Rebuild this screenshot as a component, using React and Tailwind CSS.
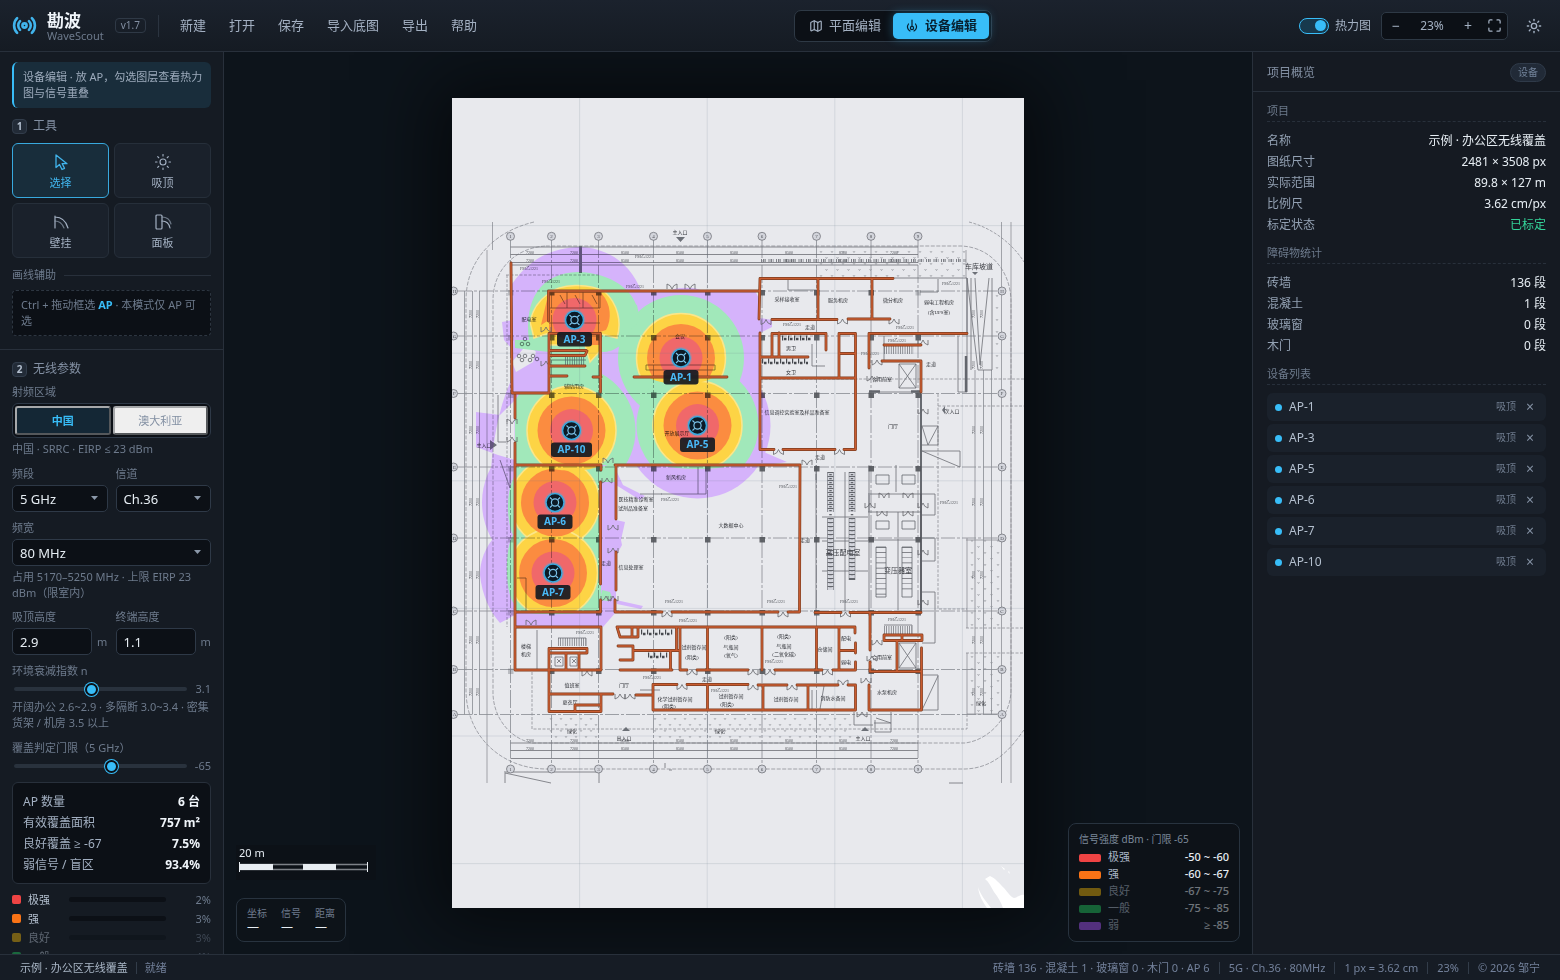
import { useState } from 'react';
import { Radio, Sun, Map as MapIcon, Maximize } from 'lucide-react';

const menus = ['新建', '打开', '保存', '导入底图', '导出', '帮助']

const levels = [
  { name: '极强', range: '-50 ~ -60', pct: '2%', color: 'bg-[#ef4444]', on: true },
  { name: '强', range: '-60 ~ -67', pct: '3%', color: 'bg-[#f97316]', on: true },
  { name: '良好', range: '-67 ~ -75', pct: '3%', color: 'bg-[#eab308]', on: false },
  { name: '一般', range: '-75 ~ -85', pct: '4%', color: 'bg-[#22c55e]', on: false },
  { name: '弱', range: '≥ -85', color: 'bg-[#a855f7]', on: false },
]

const aps = [
  { name: 'AP-1', x: 681, y: 358 },
  { name: 'AP-3', x: 574.5, y: 320 },
  { name: 'AP-5', x: 697.5, y: 425.5 },
  { name: 'AP-6', x: 555, y: 502.5 },
  { name: 'AP-7', x: 553, y: 573 },
  { name: 'AP-10', x: 571.5, y: 430.5 },
]

// axis grid of the building
const cols = [510.5, 551.5, 598.5, 653.5, 707.5, 762, 816.5, 871, 918]
const rows = [291, 336, 393.5, 467, 538, 611, 669.5, 714.5]
const rowNames = ['H', 'G', 'F', 'E', 'D', 'C', 'B', 'A']

// brick walls
const walls = `
M511 263L512 393H549V333.5H600.5V392 M548.5 321V291H759 M549 350.5H586 M549 355.5H585L587 351 M549 366H585 M549 376H567 M593 377H601
M634 377H727 M515 395V418 M515 443V670H601V627H515 M515 465H601V470 M615 465H800L799.5 612H788 M778 612H672 M662 612H615V600 M616 590V552 M616 519V465
M515 612H600.5V600 M600.5 584V482
M549 711.5V648.5H587V653H549 M566 653V670 M579 653V670 M549 694H613 M601 694V711.5H549 M601 705H575V711
M636 695H653V684.5H677 M687 684.5H748 M758 685H787 M797 685H838 M848 685H855.5V710H653V695 M707.5 685V710 M763 685V710 M808 685V710
M617 627H855V633 M617 627L620 637H638V627 M632 627V637 M618 646H633V660H620 M633 650.5H680 M670.5 651V670 M620 670H672 M680 627V670H687 M676.5 627V650
M697 670H748 M775 670H822 M833 670H855.5V662 M855.5 653V643 M707.5 627V670 M762 627V670 M816.5 627V670 M839 627V670 M839 650.5H855
M815 612.5H841 M850 612.5H921 M870 612.5V650 M870 662V671.5H921.5 M869 685V710H921.5V648 M884 635H922V640.5H884Z M902 635V640 M897 641V671
M759 319L760 278.5H893 M818 279V318 M872 279V318 M772 319.5H837 M848 319H890 M760 333V449.5H774 M783 449.5H835 M844 449.5H855.5V333.5H839V378 M760 378H855
M826 350V333.5H772V357 M779 333V357 M760 357H808 M839 353.5H855 M869 368V333.5H967 M884 345H921 M882 361H921V392`

// double doors: x, y, direction
const doors = [
  [766, 319.5, 1], [842.5, 319, 1], [894, 319, 1], [778.5, 449.5, 1], [839.5, 449.5, 1], [608, 463, -1], [667, 612, 1], [783, 612, 1],
  [845.5, 612, 1], [607, 478, 1], [606, 596, 1], [807, 465, -1], [692, 670, 1], [753, 670, 1], [770, 670, 1], [827.5, 670, 1],
  [682, 684.5, 1], [753, 685, 1], [792, 685, 1], [843, 685, -1], [587, 671, 1], [620, 694, 1], [630, 694, 1], [672, 289, -1], [690, 289, -1],
  [546, 327, 1], [546, 361, 1], [613, 525, 1], [613, 548, 1], [613, 596, 1], [872, 376, 1], [872, 656, 1], [877, 360, 1], [877, 640, 1],
  [923, 340, 1], [923, 409, 1], [923, 503, 1], [923, 550, 1], [923, 600, 1], [884, 498, -1], [908, 498, -1], [882, 511, 1], [908, 511, 1],
  [870, 503, 1], [512, 424, -1], [512, 437, 1], [531, 625, -1], [862, 712, 1], [866, 678, 1],
]

const rooms = [
  ['采样接收室', 787, 301], ['服务机房', 838, 302], ['微分机房', 893, 302], ['弱电工程机房', 939, 304], ['(含UPS室)', 939, 314],
  ['走道', 810, 329], ['男卫', 791, 350], ['女卫', 791, 374], ['信息调控实验室及样品准备室', 797, 414], ['门厅', 893, 428], ['走道', 931, 366],
  ['合用前室', 882, 381], ['大数据中心', 731, 527], ['新风机房', 676, 479], ['医技精准诊断室', 636, 501], ['试剂品准备室', 633, 510],
  ['信息处理室', 631, 569], ['走道', 606, 565], ['走道', 805, 542], ['仓储间', 825, 651], ['(阳类)', 731, 639], ['气瓶间', 731, 649], ['(氧气)', 731, 657],
  ['(阳类)', 784, 638], ['气瓶间', 784, 648], ['(二氧化碳)', 784, 656], ['试剂暂存间', 694, 649], ['(阴类)', 692, 659], ['化学试剂暂存间', 675, 701],
  ['(阴类)', 669, 708], ['试剂暂存间', 731, 698], ['(阳类)', 727, 706], ['试剂暂存间', 786, 701], ['消防水备间', 833, 700], ['水泵机房', 887, 694],
  ['合用前室', 882, 659], ['配电', 846, 640], ['弱电', 846, 664], ['值班室', 572, 687], ['更衣厅', 570, 704], ['门厅', 624, 687], ['楼梯', 526, 648], ['机房', 526, 656],
  ['配电室', 529, 321], ['辅助用房', 574, 388], ['会议', 680, 338], ['开放展示厅', 677, 435], ['绿化', 572, 733], ['绿化', 720, 733], ['绿化', 981, 705],
  ['出入口', 624, 740], ['主入口', 680, 234], ['主入口', 863, 740], ['走道', 820, 459], ['走道', 707, 681], ['主入口', 484, 447], ['次入口', 952, 413],
]

// lines of furniture, ramps and stairs
const details = `
M761 278H967V333 M869 392H922 M958 336V392H967V278 M938 279V292H920 M816 465V612 M869 465V612 M896 465V492 M868 494H921V612 M868 512H921 M868 540H921 M898 512V540 M898 540V611
M822 517H868 M822 541H868 M822 571H868 M845 472V611 M816 474V480 M869 495V512 M921 394V612M921 494H935V515H922 M922 538H935V561H922 M922 592H935V643H922 M922 675H938V710H922L938 676
M922 426H938V445H922 M922 426L928 445L938 426 M922 451H960V467L922 451 M661 494H706V467 M698 467V494 M640 494H662 M537 630V670 M558 638H586V646 M884 336V360 M884 625H912V634
M646 365H715V370H646Z M498 395V442H506 M500 460L510 488V468 M517 578H526V611 M788 279V290H816 M812 344V366H825 M875 720V732H891V712 M854 712V725H873 M874 723H891L876 718
M504 772H600 M505 773L551 783 M505 773V783 M599 773V783 M967 278L978 370H992V278 M975 278L980 365L989 278 M971 278V370 M550 292H600V308H550 M567 292V308 M583 292V308 M549 323H600 M550 360H586
M899 364L916 388 M916 364L899 388 M899 364H916V388H899Z M899 643L916 668 M916 643L899 668 M899 643H916V668H899Z M640 690H660 M812 690V709 M824 686L820 709 M665 768V763 M669 770H672 M949 783H963
M555 657H563V666H555Z M570 657H577V666H570Z M557 659L561 663 M561 659L557 663 M572 659L576 663 M576 659L572 663 M560 295L565 304 M575 295L580 304 M592 295L597 304`

const serif = '"Liberation Serif", "Noto Sans CJK SC", serif'

function Marks({ x0, y0, x1, y1, step = 9 }) {
  const out = []
  for (let y = y0, r = 0; y < y1; y += 6, r++) {
    for (let x = x0 + (r % 2) * (step / 2); x < x1; x += step) {
      out.push(`M${x} ${y}l1 1.6l1 -1.6`)
    }
  }
  return <path d={out.join('')} stroke="#999ba0" strokeWidth="0.6" fill="none" />
}

function Drawing() {
  return (
    <g>
      {/* site roads */}
      <g fill="none" stroke="#8f9196" strokeWidth="0.7">
        <path d="M534 222C492 232 466 262 466 300V690C466 735 500 768 545 769H965C1000 768 1016 740 1024 730" strokeDasharray="4 1.5" />
        <path d="M969 222C1000 230 1018 252 1024 262" strokeDasharray="3 1.5" />
        <path d="M545 246C515 248 493 270 493 300V690C492 715 508 738 532 743H965C990 740 1012 715 1011 688V300C1010 270 990 247 961 246Z" strokeDasharray="4 1.5" />
        <path d="M492.5 222V250M487 250V783M1001.5 222V783M1011 222V783M966 250V278" />
        <path d="M506 275H600M507 275V627M532 672V729H967V714M938 394V609H967M760 379H1024M938 406H1024M966 628H1024M966 653H1024" strokeDasharray="3 1.5" />
        <path d="M967 538V628M967 653V714H1003M966 540H1003" />
      </g>
      <g stroke="#96989d" strokeWidth="0.8">
        {cols.map((x) => <path key={x} d={`M${x} 240V765`} strokeDasharray="18 2 3 2" />)}
        {rows.map((y) => <path key={y} d={`M458 ${y}H998`} strokeDasharray="14 2 3 2" />)}
        {[464.5, 472.5, 479.5].map((x) => <path key={x} d={`M${x} 291V714.5`} />)}
        {[975, 983.5, 991.5].map((x) => <path key={x} d={`M${x} 370V714.5`} />)}
        {[247, 254.5, 262.5, 265, 743, 750.5, 758.5].map((y) => <path key={y} d={`M510.5 ${y}H918`} stroke="#77797e" />)}
      </g>
      <path d="M761 260.500H966" stroke="#8a8c91" strokeWidth="3" strokeDasharray="1 1 1.5 0.8 0.7 2.5" />
      <Marks x0={820} y0={251} x1={964} y1={276} step={11} />
      <Marks x0={550} y0={718} x1={598} y1={740} step={10} />
      <Marks x0={654} y0={718} x1={852} y1={740} step={10} />
      <Marks x0={971} y0={540} x1={1000} y1={625} step={13} />
      <Marks x0={971} y0={656} x1={1000} y1={712} step={13} />
      <Marks x0={996} y0={295} x1={999} y1={370} />
      <path d={details} fill="none" stroke="#77797e" strokeWidth="0.8" />
      <path d="M921 394V612" stroke="#55575c" strokeWidth="1.5" />
      {/* columns */}
      {rows.slice(0, 7).map((y) => cols.map((x) => (
        <rect key={`${x}-${y}`} x={x - 2.5} y={y - 1} width="5.5" height="5.5" fill="#5b5d62" opacity={x === 510.5 || (y < 330 && x > 900) ? 0.3 : 0.9} />
      )))}
      <path d="M869 391.5H880M911 391.5H921M966 356V392" stroke="#6d7075" strokeWidth="2.4" />
      <path d="M580.5 246V273" stroke="#73777d" strokeWidth="3" />
      {/* stairs */}
      <path d="M884 350H914M884 630H912M558 642H586" stroke="#77797e" strokeWidth="8" strokeDasharray="0.7 1.6" />
      <path d="M565 361H585" stroke="#7b6f93" strokeWidth="8" strokeDasharray="0.7 1.6" />
      {/* equipment racks */}
      <g fill="none" stroke="#6d6f74">
        <path d="M830.5 472V512M852 472V512M830.5 518V590M852 518V580" strokeWidth="6.5" />
        <path d="M830.5 473V512M852 473V512M830.5 519V590M852 519V579" strokeWidth="5.5" stroke="#e8e9ed" strokeDasharray="3 1" />
        <path d="M830.5 474V590M852 474V580" strokeWidth="2.5" strokeDasharray="1.2 2.8" />
        <path d="M876 547H886V597H876ZM902 547H912V597H902ZM876 475H889V484H876ZM902 475H915V484H902ZM876 521H889V529H876ZM902 521H915V529H902Z" strokeWidth="0.8" />
        <path d="M881 547V597M907 547V592" strokeWidth="10" strokeDasharray="0.7 4.5" />
      </g>
      {/* sanitary rows */}
      <g fill="none" stroke="#4e5055">
        <path d="M782 338H812M762 361H808M641 632H673M648 655H668" strokeWidth="5" strokeDasharray="1.2 4.8" />
        <path d="M784 339H812M764 363H808M643 634H673M650 657H668" strokeWidth="2.5" strokeDasharray="2.5 3.5" />
      </g>
      <g fill="none" stroke="#55575c" strokeWidth="0.7">
        {[[525, 339], [522, 344], [528, 344], [519, 356], [525, 356], [522, 360], [533, 356], [530, 360], [537, 359]].map(([x, y]) => (
          <circle key={`${x}${y}`} cx={x} cy={y} r="1.8" />
        ))}
      </g>
      {/* axis bubbles */}
      <g fill="#e8e9ed" stroke="#7d7f84" strokeWidth="0.8">
        {cols.map((x) => [236.3, 769].map((y) => <circle key={`${x}${y}`} cx={x} cy={y} r="4" />))}
        {rows.map((y) => [453.5, 1002].map((x) => <circle key={`${x}${y}`} cx={x} cy={y} r="4" />))}
      </g>
      <g fill="#55575c" fontSize="5" textAnchor="middle" fontFamily={serif}>
        {cols.map((x, i) => [238, 770.7].map((y) => <text key={`${x}${y}`} x={x} y={y}>{i + 1}</text>))}
        {rows.map((y, i) => [454.5, 1002].map((x) => <text key={`${x}${y}`} x={x} y={y + 1.7}>{rowNames[i]}</text>))}
      </g>
      <g fill="#55575c" fontSize="4" textAnchor="middle" fontFamily={serif}>
        {[530, 574, 625, 680, 734, 789, 843, 894].map((x) => [253.5, 261.5, 742, 749.8].map((y) => (
          <text key={`${x}${y}`} x={x} y={y}>{x > 600 && x < 890 ? 8500 : 7200}</text>
        )))}
        {[314, 365, 430, 502, 575, 640, 692].map((y) => [472, 479, 975, 983].map((x) => (
          <text key={`${x}${y}`} transform={`translate(${x} ${y}) rotate(-90)`}>7200</text>
        )))}
        {[[529, 270], [551, 283], [635, 288], [644, 258], [670, 501], [674, 603], [788, 488], [849, 603], [688, 622], [776, 603], [949, 504], [720, 692], [774, 663], [585, 634], [897, 342], [897, 621], [870, 355], [951, 285], [792, 326], [905, 329], [652, 679]].map(([x, y]) => (
          <text key={`${x}${y}`} x={x} y={y}>FM乙1221</text>
        ))}
      </g>
      <g fill="#35373c" fontSize="5" textAnchor="middle" fontFamily={serif}>
        {rooms.map(([t, x, y]) => <text key={`${t}${x}${y}`} x={x} y={y}>{t}</text>)}
      </g>
      <g fill="#45474c" textAnchor="middle" fontSize="7" fontFamily={serif}>
        <text x="979" y="269">车库坡道</text>
        <text x="843" y="555">高压配电室</text>
        <text x="898" y="573">变压器室</text>
      </g>
      <path d="M676 237H685L680.5 242ZM490 440L497 445L490 450ZM622 731L626 727L630 731ZM861 731L865 727L869 731ZM945 406V414L942 410ZM972 272H978L975 275Z" fill="#777a80" />
    </g>
  )
}

function Heat() {
  return (
    <g>
      <defs>
        <clipPath id="hall"><path d="M549 291H760V465H515V393H549Z" /></clipPath>
        <clipPath id="west"><path d="M515 465H601V612H515Z" /></clipPath>
        <clipPath id="lobby"><path d="M530 270H625V348H602V371H549V350H530Z" /></clipPath>
        <clipPath id="lower"><path d="M470 460H601V627H470Z" /></clipPath>
        <clipPath id="ap1"><path d="M600 291H760V378H600Z" /></clipPath>
      </defs>
      {/* weak */}
      <g fill="#d5b3fb">
        <path d="M512 393V284C530 258 552 248 580 247C610 248 632 266 641 291H755L760 300V465H515V395L512 393Z" />
        <circle cx="697.5" cy="425.5" r="73" />
        <g clipPath="url(#lower)">
          <circle cx="555" cy="502.5" r="73" />
          <path d="M515 520C490 535 480 555 480 575C482 595 490 612 500 623L515 615Z" />
        </g>
        <path d="M514 375C500 400 493 440 491 470L515 480ZM476 412L500 415L515 400V460L498 455L476 447ZM502 322L513 320V350L504 340Z" />
        <path d="M601 465H616V612L603 627H515V612H601ZM616 470L623 485L645 496L640 500L616 485ZM616 520L625 522L621 540L622 545L616 556ZM616 600L643 606L641 609L617 604ZM760 318L772 320V327L760 333ZM759 450L787 462L760 466Z" />
        <path d="M668 291A26 12 0 0 1 704 291Z" />
      </g>
      <path d="M512 362L528 343L536 352L533 362L516 372ZM630 467L637 469L632 476L645 488L641 495L628 480Z" fill="#e8e9ed" />
      {/* fair */}
      <g fill="#a1e8ba">
        <path d="M529 340C524 300 540 273 578 272C612 273 632 290 637 307L634 325L622 345C612 350 612 352 601 352V333H549V352L515 348V340Z" />
        <g clipPath="url(#hall)">
          <circle cx="681" cy="358" r="63" />
          <circle cx="697.5" cy="425.5" r="61" />
          <circle cx="571.5" cy="430.5" r="64" />
          <path d="M548 291H600L637 305L640 320L628 333H601V378H549ZM569 366H601V393H549V376Z" />
        </g>
        <path d="M515 465H601V612H515ZM515 475C506 490 506 520 513 535C504 550 505 595 515 605ZM520 612A60 12 0 0 0 586 612ZM598 468L617 462V482H600ZM602 590L610 592L612 597L608 601L600 600ZM660 465A50 12 0 0 0 735 465Z" />
        <path d="M605 334L613 340L607 352L600 346Z" />
      </g>
      {/* good */}
      <g clipPath="url(#lobby)">
        <path d="M530 322A45 45 0 0 1 548 294C560 283 590 283 605 292A45 45 0 0 1 617 338L601 334V350L590 362L585 345H549V333L534 338Z" fill="#fdd445" stroke="#fbe689" strokeWidth="1.5" />
        <path d="M549 291H601V345H568V333H549V320L541 325Z" fill="#fb8c40" />
        <path d="M602 294A32 32 0 0 1 606 330L600 332V292Z" fill="#fb8c40" />
        <circle cx="574.5" cy="320" r="22" fill="#f0686a" />
      </g>
      {aps.filter((a) => a.name !== 'AP-3').map((a) => {
        const west = a.name === 'AP-6' || a.name === 'AP-7'
        const clip = west ? 'url(#west)' : a.name === 'AP-1' ? 'url(#ap1)' : 'url(#hall)'
        return (
          <g key={a.name} clipPath={clip}>
            <circle cx={a.x} cy={a.y} r="44.5" fill="#fdd445" stroke="#fbe689" strokeWidth="1.5" />
          </g>
        )
      })}
      {aps.filter((a) => a.name !== 'AP-3').map((a) => (
        <g key={a.name}>
          <circle cx={a.x} cy={a.y} r="34" fill="#fb8c40" clipPath={a.name === 'AP-1' ? 'url(#ap1)' : undefined} />
          <circle cx={a.x} cy={a.y} r="21.5" fill="#f0686a" clipPath={a.name === 'AP-1' ? 'url(#ap1)' : undefined} />
        </g>
      ))}
      <path d="M650 378H712C700 386 664 386 650 378Z" fill="#fdd445" />
      <path d="M541 465A35 11 0 0 0 602 465Z" fill="#fdd445" />
    </g>
  )
}

function FloorPlan() {
  return (
    <svg viewBox="452 98 572 810" className="block h-auto w-[572px] shrink-0 bg-[#e8e9ed] shadow-[0_0_70px_18px_rgba(0,0,0,0.55)]" role="img" aria-label="办公区平面图">
      <Heat />
      <g style={{ mixBlendMode: 'multiply' }}><Drawing /></g>
      <path d="M579.6 98V908M707.2 98V908M834.8 98V908M962.4 98V908M452 225.6H1024M452 353.2H1024M452 480.8H1024M452 608.4H1024M452 736H1024M452 863.6H1024" stroke="#64748b" strokeOpacity="0.16" strokeWidth="1" />
      <path d="M985 879L990 876C995 878 999 883 1004 888C1008 893 1011 897 1014 898C1018 897 1021 894 1024 895V908H1003C1001 902 998 897 994 892C991 887 989 882 985 879ZM978 887C980 894 985 900 991 908H987C983 902 979 896 978 887ZM1001 866L1004 870L1005 869ZM1008 872L1010 874L1009 871Z" fill="#fff" />
      <g fill="none" stroke="#64666b" strokeWidth="0.8">
        {doors.map(([x, y, d], i) => (
          <path key={i} d={`M${x - 5} ${y}V${y + 5 * d}Q${x - 1} ${y + 4 * d} ${x} ${y}Q${x + 1} ${y + 4 * d} ${x + 5} ${y + 5 * d}V${y}`} />
        ))}
      </g>
      <path d={walls} fill="none" stroke="#7d3d20" strokeWidth="2.8" strokeLinecap="round" strokeLinejoin="round" />
      <path d={walls} fill="none" stroke="#c95c30" strokeWidth="1.5" strokeLinecap="round" strokeLinejoin="round" />
      {aps.map((a) => {
        const w = a.name === 'AP-10' ? 41 : 35
        return (
          <g key={a.name}>
            <circle cx={a.x} cy={a.y} r="11" fill="#38bdf8" opacity="0.25" />
            <circle cx={a.x} cy={a.y} r="9" fill="#0b1a26" stroke="#38a9de" strokeWidth="1.5" />
            <g stroke="#7cc4ea" strokeWidth="1.2" fill="none">
              <circle cx={a.x} cy={a.y} r="3.6" />
              <path d={`M${a.x - 5} ${a.y - 5}l2.2 2.2M${a.x + 5} ${a.y - 5}l-2.2 2.2M${a.x - 5} ${a.y + 5}l2.2 -2.2M${a.x + 5} ${a.y + 5}l-2.2 -2.2`} />
            </g>
            <rect x={a.x - w / 2} y={a.y + 12} width={w} height="14.5" rx="3" fill="#171b22" fillOpacity="0.93" />
            <text x={a.x} y={a.y + 22.5} textAnchor="middle" fontSize="10" fontWeight="700" fill="#49b8f5" fontFamily='"Noto Sans", sans-serif'>{a.name}</text>
          </g>
        )
      })}
    </svg>
  )
}

function CursorIcon() {
  return (
    <svg width="18" height="18" viewBox="0 0 18 18" fill="none" stroke="currentColor" strokeWidth="1.3" strokeLinejoin="round">
      <path d="M4 2L4 14.500L7.500 11.500L10 16.500L12.500 15.300L10.200 10.700H15Z" />
    </svg>
  )
}

function WallIcon() {
  return (
    <svg width="18" height="18" viewBox="0 0 18 18" fill="none" stroke="currentColor" strokeWidth="1.2" strokeLinecap="round">
      <path d="M3 3V15M3 4C9 4 14 8 16 15" />
      <path d="M3 8C7 8 10 10 12 15" opacity="0.6" />
    </svg>
  )
}

function PanelIcon() {
  return (
    <svg width="18" height="18" viewBox="0 0 18 18" fill="none" stroke="currentColor" strokeWidth="1.2" strokeLinecap="round">
      <rect x="2" y="2" width="6" height="14" rx="1" />
      <path d="M8 4C13 4 16 7 17 11" opacity="0.6" />
      <path d="M8 8C12 8 15 10 16 15" />
    </svg>
  )
}

function AntennaIcon() {
  return (
    <svg width="14" height="14" viewBox="0 0 14 14" fill="none" stroke="currentColor" strokeWidth="1.2" strokeLinecap="round">
      <path d="M7 1V7M3.500 5C1.500 7.500 2.500 10.500 5 12M10.500 5C12.500 7.500 11.500 10.500 9 12" />
      <circle cx="7" cy="9" r="1.600" />
    </svg>
  )
}

function Step({ n, children }) {
  return (
    <h2 className="flex h-4 items-center gap-1.5 text-xs text-[#8390a3]">
      <span className="grid size-[15px] place-items-center rounded border border-[#323d4b] bg-[#222b37] text-[10px] font-bold text-[#b3bfce]">{n}</span>
      {children}
    </h2>
  )
}

function Pick({ id, label, options }) {
  return (
    <div className="min-w-0 flex-1">
      <label htmlFor={id} className="block">{label}</label>
      <div className="relative mt-[3px]">
        <select id={id} className="block h-[27px] w-full appearance-none rounded-[5px] border border-[#2e3947] bg-[#0c1016] px-[7px] text-[13px] leading-5 text-[#e6edf3]">
          {options.map((o) => <option key={o}>{o}</option>)}
        </select>
        <svg className="pointer-events-none absolute top-[11px] right-2.5" width="7" height="4" viewBox="0 0 7 4"><path d="M0 0H7L3.500 4Z" fill="#8b98a9" /></svg>
      </div>
    </div>
  )
}

function Height({ id, label, value }) {
  return (
    <div className="min-w-0 flex-1">
      <label htmlFor={id} className="block">{label}</label>
      <div className="mt-[3px] flex items-center gap-[5px]">
        <input id={id} type="text" defaultValue={value} className="h-[27px] w-20 min-w-0 rounded-[5px] border border-[#2e3947] bg-[#0c1016] px-[7px] text-[13px] text-[#e6edf3]" />
        <span>m</span>
      </div>
    </div>
  )
}

function Slider({ id, label, value, onChange, min, max, step }) {
  return (
    <div>
      <label htmlFor={id} className="block">{label}</label>
      <div className="mt-0.5 flex h-4 items-center gap-1.5">
        <input
          id={id}
          type="range"
          min={min}
          max={max}
          step={step}
          value={value}
          onChange={(e) => onChange(e.target.value)}
          className="mx-0.5 h-1 min-w-0 flex-1 appearance-none rounded-full bg-[#29323d] [&::-webkit-slider-thumb]:size-[13px] [&::-webkit-slider-thumb]:appearance-none [&::-webkit-slider-thumb]:rounded-full [&::-webkit-slider-thumb]:border-2 [&::-webkit-slider-thumb]:border-[#0d1117] [&::-webkit-slider-thumb]:bg-[#38bdf8] [&::-webkit-slider-thumb]:shadow-[0_0_0_1px_#38bdf8]"
        />
        <output htmlFor={id}>{value}</output>
      </div>
    </div>
  )
}

function Toolbar() {
  const [heat, setHeat] = useState(true)
  return (
    <header className="flex h-[52px] shrink-0 items-center justify-between border-b border-[#28303b] bg-linear-to-b from-[#1b222d] to-[#151b23] pr-[18px] pl-3">
      <div className="flex items-center">
        <Radio size={25} strokeWidth={2.5} className="text-[#41b4ec]" />
        <div className="ml-2.5">
          <h1 className="text-[17px] leading-5 font-bold text-[#f0f5fa]">勘波</h1>
          <p className="text-[11px] leading-[10px] text-[#6d7a8c]">WaveScout</p>
        </div>
        <span className="ml-[11px] rounded border border-[#2f3946] px-[5px] text-[10px] leading-[13px] text-[#8390a3]">v1.7</span>
        <div className="mr-[11px] ml-3 h-[22px] w-px bg-[#2b3440]" />
        <nav className="flex gap-[3px] text-[13px] text-[#a3b0c2]">
          {menus.map((m) => <button key={m} type="button" className="px-2.5 py-1">{m}</button>)}
        </nav>
      </div>

      <div className="flex h-8 items-center rounded-[7px] border border-[#2e3945] bg-[#0c1016] p-0.5 text-[13px]">
        <button type="button" className="flex h-[26px] items-center gap-1.5 px-3 text-[#a3b0c2]"><MapIcon size={14} />平面编辑</button>
        <button type="button" className="flex h-[26px] items-center gap-1.5 rounded-[5px] bg-[#38bdf8] px-3 font-bold text-[#08202f] shadow-[0_0_10px_rgba(56,189,248,0.35)]"><AntennaIcon />设备编辑</button>
      </div>

      <div className="flex items-center text-xs text-[#a3b0c2]">
        <label className="flex items-center gap-1.5">
          <input type="checkbox" checked={heat} onChange={() => setHeat(!heat)} className="peer sr-only" />
          <span className="flex h-4 w-[30px] items-center justify-end rounded-full border border-[#38bdf8] bg-[#17394d] px-0.5"><span className="size-[11px] rounded-full bg-[#38bdf8]" /></span>
          热力图
        </label>
        <div className="ml-2.5 flex h-7 items-center rounded-[5px] border border-[#2e3945] bg-[#0c1016]">
          <button type="button" className="w-7 text-sm" aria-label="缩小">−</button>
          <span className="w-11 text-center">23%</span>
          <button type="button" className="w-7 text-sm" aria-label="放大">+</button>
          <button type="button" className="grid w-[25px] place-items-center" aria-label="适应窗口"><Maximize size={15} /></button>
        </div>
        <button type="button" className="ml-[18px]" aria-label="切换主题"><Sun size={16} /></button>
      </div>
    </header>
  )
}

function LeftPanel() {
  const [n, setN] = useState('3.1')
  const [limit, setLimit] = useState('-65')
  const tools = [
    ['选择', <CursorIcon />],
    ['吸顶', <Sun size={18} strokeWidth={1.5} />],
    ['壁挂', <WallIcon />],
    ['面板', <PanelIcon />],
  ]
  const stats = [['AP 数量', '6 台'], ['有效覆盖面积', '757 m²'], ['良好覆盖 ≥ -67', '7.5%'], ['弱信号 / 盲区', '93.4%']]

  return (
    <aside className="w-56 shrink-0 overflow-hidden border-r border-[#28303b] bg-[#151b23] text-[11px] leading-4 text-[#6d7a8c]">
      <section className="border-b border-[#28303b] px-3 pt-2.5 pb-[13px]">
        <p className="rounded-md border-l-2 border-[#38bdf8] bg-[#192d3b] py-[7px] pr-2 pl-[9px] text-[#9dabbc]">设备编辑 · 放 AP，勾选图层查看热力图与信号重叠</p>
        <div className="mt-2.5"><Step n="1">工具</Step></div>
        <div className="mt-[9px] grid grid-cols-2 gap-[5px]">
          {tools.map(([name, icon], i) => (
            <button key={name} type="button" className={'flex h-[55px] flex-col items-center justify-center gap-1 rounded-md border pt-[3px] ' + (i === 0 ? 'border-[#38a9de] bg-[#182d3b] text-[#41b4ec]' : 'border-[#262f3a] bg-[#1a212b] text-[#a3b0c2]')}>
              {icon}
              <span>{name}</span>
            </button>
          ))}
        </div>
        <h3 className="mt-[9px] flex items-center gap-2 after:h-px after:flex-1 after:bg-[#28303b]">画线辅助</h3>
        <p className="mt-[7px] rounded border border-dashed border-[#2d3641] bg-[#0c1016] px-2 py-1.5">Ctrl + 拖动框选 <b className="text-[#38bdf8]">AP</b> · 本模式仅 AP 可选</p>
      </section>

      <section className="px-3 pt-[11px]">
        <Step n="2">无线参数</Step>
        <h3 className="mt-[7px]">射频区域</h3>
        <div className="mt-[3px] flex gap-0.5 rounded-md border border-[#2e3947] bg-[#0c1016] p-0.5">
          <button type="button" className="h-[29px] flex-1 rounded-[3px] border-2 border-t-[#a6a8aa] border-r-[#55585b] border-b-[#55585b] border-l-[#a6a8aa] bg-[#142735] font-bold text-[#38bdf8]">中国</button>
          <button type="button" className="h-[29px] flex-1 rounded-[3px] border-2 border-t-[#a6a8aa] border-r-[#55585b] border-b-[#55585b] border-l-[#a6a8aa] bg-[#efefef] text-[#8390a3]">澳大利亚</button>
        </div>
        <p className="mt-[3px]">中国 · SRRC · EIRP ≤ 23 dBm</p>

        <div className="mt-[9px] flex gap-2">
          <Pick id="band" label="频段" options={['5 GHz', '2.4 GHz']} />
          <Pick id="channel" label="信道" options={['Ch.36', 'Ch.149']} />
        </div>
        <div className="mt-2"><Pick id="width" label="频宽" options={['80 MHz', '40 MHz', '20 MHz']} /></div>
        <p className="mt-[3px]">占用 5170–5250 MHz · 上限 EIRP 23 dBm（限室内）</p>

        <div className="mt-2 flex gap-2">
          <Height id="ceil" label="吸顶高度" value="2.9" />
          <Height id="client" label="终端高度" value="1.1" />
        </div>

        <div className="mt-2"><Slider id="n" label="环境衰减指数 n" value={n} onChange={setN} min="2" max="4.5" step="0.1" /></div>
        <p className="mt-0.5">开阔办公 2.6~2.9 · 多隔断 3.0~3.4 · 密集货架 / 机房 3.5 以上</p>
        <div className="mt-[9px]"><Slider id="limit" label="覆盖判定门限（5 GHz）" value={limit} onChange={setLimit} min="-85" max="-50" step="1" /></div>

        <dl className="mt-2 rounded-md border border-[#28303b] bg-[#0c1016] px-2.5 py-2 text-xs text-[#a3b0c2]">
          {stats.map(([k, v]) => (
            <div key={k} className="flex h-[21px] items-center justify-between">
              <dt>{k}</dt>
              <dd className="font-bold text-[#f0f5fa]">{v}</dd>
            </div>
          ))}
        </dl>
        <ul className="mt-1.5">
          {levels.filter((l) => l.pct).map((l) => (
            <li key={l.name} className={'flex h-[19px] items-center ' + (l.on ? '' : 'opacity-45')}>
              <span className={'size-[9px] rounded-xs ' + l.color} />
              <span className="ml-[7px] w-[41px] text-[#b3bfce]">{l.name}</span>
              <span className="h-[5px] w-[97px] rounded-full bg-[#0c1016]" />
              <span className="ml-auto">{l.pct}</span>
            </li>
          ))}
        </ul>
      </section>
    </aside>
  )
}

function Canvas() {
  return (
    <main className="relative flex min-w-0 flex-1 items-center justify-center overflow-hidden bg-[#0d141b]">
      <FloorPlan />

      {/* SCALE + CURSOR READOUT */}
      <div className="absolute bottom-3 left-3">
        <div className="mb-[18px] w-[140px] bg-[#0c1117] px-[3px] pb-2 text-[#e6edf3]">
          <p className="mb-px text-[11px] leading-4">20 m</p>
          <svg width="130" height="10" viewBox="0 0 130 10">
            <path d="M0 2.500H129M0 7.500H129" stroke="#7d8288" strokeWidth="1.500" />
            <path d="M1 2H34V8H1ZM64 2H97V8H64Z" fill="#e8edf2" />
            <path d="M0.500 0V10M128.500 0V10" stroke="#e8edf2" />
          </svg>
        </div>
        <dl className="inline-flex h-11 items-center gap-3.5 rounded-lg border border-[#28333f] bg-[#0d1319] px-2.5 text-[10px] leading-[14px] text-[#6d7a8c]">
          {['坐标', '信号', '距离'].map((t) => (
            <div key={t}>
              <dt>{t}</dt>
              <dd className="text-xs leading-[14px] text-[#e6edf3]">—</dd>
            </div>
          ))}
        </dl>
      </div>

      {/* LEGEND */}
      <div className="absolute right-3 bottom-3 w-[172px] rounded-lg border border-[#28333f] bg-[#0d1218] px-2.5 py-[7px] text-[11px]">
        <h3 className="mb-0.5 text-[10px] leading-4 text-[#7c899a]">信号强度 dBm · 门限 -65</h3>
        {levels.map((l) => (
          <div key={l.name} className={'flex h-[17px] items-center ' + (l.on ? '' : 'opacity-45')}>
            <span className={'h-2 w-[22px] rounded-xs ' + l.color} />
            <span className="ml-[7px] text-[#a9b6c6]">{l.name}</span>
            <span className="ml-auto font-medium text-[#e6edf3]">{l.range}</span>
          </div>
        ))}
      </div>
    </main>
  )
}

function Facts({ title, items }) {
  return (
    <section>
      <h3 className="mb-2 border-b border-dashed border-[#28303b] pb-0.5 text-[11px] leading-4 text-[#6d7a8c]">{title}</h3>
      <dl>
        {items.map(([k, v]) => (
          <div key={k} className="flex h-[21px] items-center justify-between">
            <dt className="text-[#93a1b3]">{k}</dt>
            <dd className={v === '已标定' ? 'text-[#34d399]' : 'text-[#e6edf3]'}>{v}</dd>
          </div>
        ))}
      </dl>
    </section>
  )
}

function RightPanel() {
  return (
    <aside className="w-[308px] shrink-0 border-l border-[#28303b] bg-[#151a22] text-xs">
      <div className="flex h-10 items-center justify-between border-b border-[#28303b] px-3.5 pt-0.5">
        <h2 className="text-[#8390a3]">项目概览</h2>
        <span className="rounded-full border border-[#2f3a49] bg-[#212a37] px-[7px] text-[10px] leading-[17px] text-[#72839a]">设备</span>
      </div>
      <div className="flex flex-col gap-2.5 px-3.5 pt-[11px]">
        <Facts title="项目" items={[['名称', '示例 · 办公区无线覆盖'], ['图纸尺寸', '2481 × 3508 px'], ['实际范围', '89.8 × 127 m'], ['比例尺', '3.62 cm/px'], ['标定状态', '已标定']]} />
        <Facts title="障碍物统计" items={[['砖墙', '136 段'], ['混凝土', '1 段'], ['玻璃窗', '0 段'], ['木门', '0 段']]} />
        <section>
          <h3 className="mb-2 border-b border-dashed border-[#28303b] pb-0.5 text-[11px] leading-4 text-[#6d7a8c]">设备列表</h3>
          <ul className="flex flex-col gap-[3px]">
            {aps.map((a) => (
              <li key={a.name} className="flex h-7 items-center rounded-md bg-[#1a212b] pr-2.5 pl-2">
                <span className="size-[7px] rounded-full bg-[#38bdf8]" />
                <span className="ml-[7px] text-[#b3bfce]">{a.name}</span>
                <span className="ml-auto text-[10px] text-[#6d7a8c]">吸顶</span>
                <button type="button" className="ml-2 w-3 text-center text-sm leading-4 text-[#8390a3]" aria-label={'删除 ' + a.name}>×</button>
              </li>
            ))}
          </ul>
        </section>
      </div>
    </aside>
  )
}

function StatusBar() {
  const info = ['砖墙 136 · 混凝土 1 · 玻璃窗 0 · 木门 0 · AP 6', '5G · Ch.36 · 80MHz', '1 px = 3.62 cm', '23%', '© 2026 邹宁']
  return (
    <footer className="flex h-[26px] shrink-0 items-center justify-between border-t border-[#28303b] bg-[#161c25] px-5 text-[11px] leading-3 text-[#72809a]">
      <div className="flex divide-x divide-[#323c49]">
        <span className="pr-2 text-[#a9b6c6]">示例 · 办公区无线覆盖</span>
        <span className="pl-2">就绪</span>
      </div>
      <div className="flex divide-x divide-[#323c49]">
        {info.map((t) => <span key={t} className="px-[9px] last:pr-0">{t}</span>)}
      </div>
    </footer>
  )
}

export default function App() {
  return (
    <div className='flex h-screen flex-col overflow-hidden bg-[#0d141b] font-["Noto_Sans","Open_Sans","Noto_Sans_CJK_SC",sans-serif]'>
      <Toolbar />
      <div className="flex min-h-0 flex-1">
        <LeftPanel />
        <Canvas />
        <RightPanel />
      </div>
      <StatusBar />
    </div>
  )
}
